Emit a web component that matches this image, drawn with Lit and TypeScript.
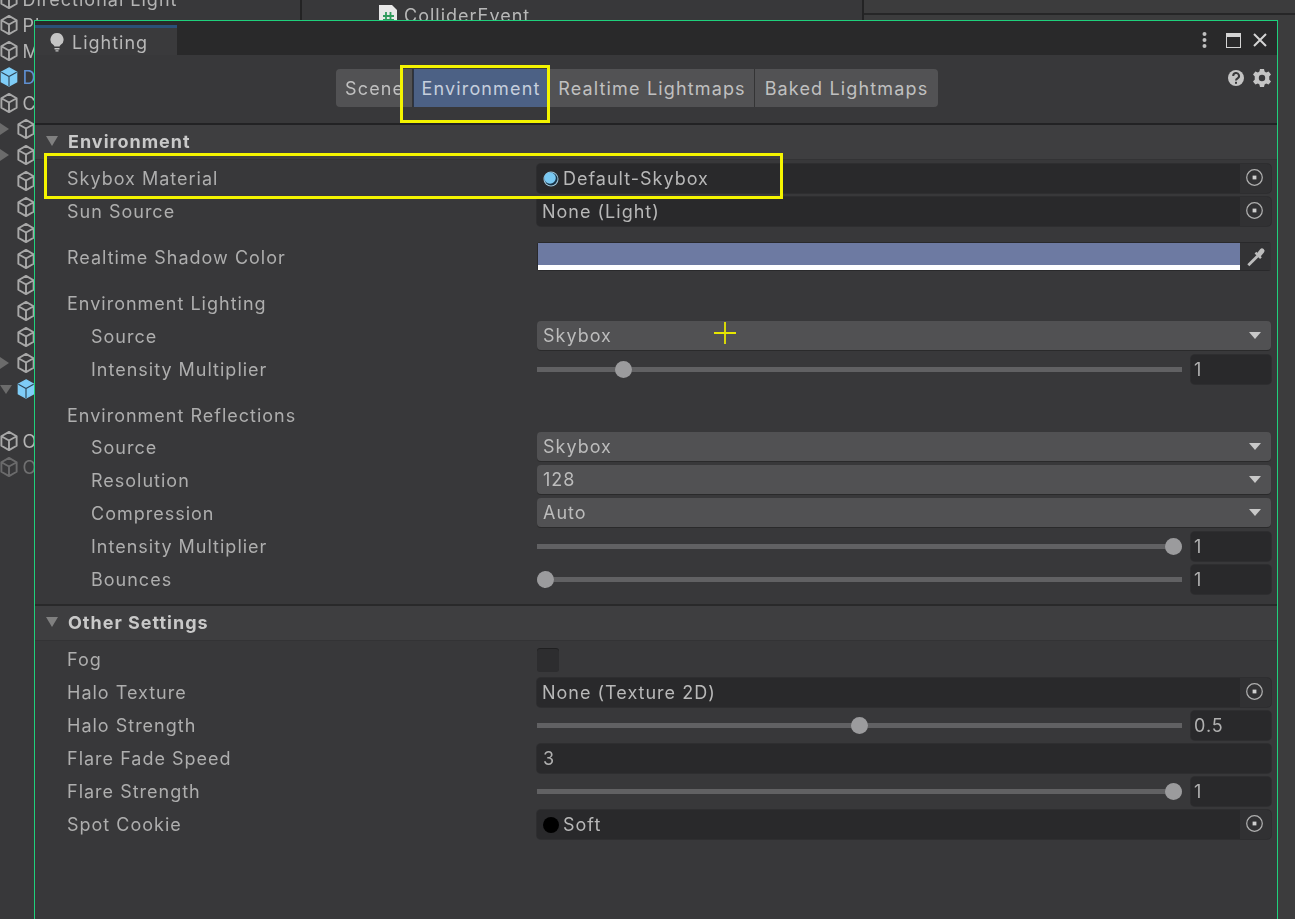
import { LitElement, html, css } from "lit";
import { customElement } from "lit/decorators.js";

const cube = (cls: string) => html`<svg class="cube ${cls}" viewBox="1 0.500 18 21">
  <path class="fill" d="M10 1.500 18 6v10l-8 4.500L2 16V6z"/>
  <path class="line" d="M10 1.500 18 6v10l-8 4.500L2 16V6zM2 6l8 4.500L18 6M10 10.500v10"/>
</svg>`;
const picker = () => html`<span class="pick"><svg viewBox="0 0 20 20"><circle cx="10" cy="10" r="8.200"/><rect x="8" y="8" width="4" height="4"/></svg></span>`;
const tri = () => html`<svg class="tri" viewBox="0 0 12 10"><path d="M0 0h12L6 10z"/></svg>`;
const dtri = () => html`<svg class="dtri" viewBox="0 0 12 7"><path d="M0 0h12L6 7z"/></svg>`;
const sky = () => html`<svg class="mini" viewBox="0 0 16 16"><circle cx="8" cy="8" r="7.500" fill="#9fc4d8"/><circle cx="8" cy="8" r="6.500" fill="#173347"/><circle cx="7" cy="7" r="5.800" fill="#79c8f2"/></svg>`;
const cookie = () => html`<svg class="mini" viewBox="0 0 16 16"><circle cx="8" cy="8" r="8" fill="#000"/></svg>`;

type Row = { label: string; kind: string; value?: string; pos?: number; sub?: boolean; gap?: boolean; up?: boolean; icon?: string };

const env: Row[] = [
  { label: "Skybox Material", kind: "object", value: "Default-Skybox", icon: "sky" },
  { label: "Sun Source", kind: "object", value: "None (Light)" },
  { label: "Realtime Shadow Color", kind: "color", gap: true },
  { label: "Environment Lighting", kind: "none", gap: true },
  { label: "Source", kind: "drop", value: "Skybox", sub: true },
  { label: "Intensity Multiplier", kind: "slider", value: "1", pos: 0.124, sub: true },
  { label: "Environment Reflections", kind: "none", gap: true },
  { label: "Source", kind: "drop", value: "Skybox", sub: true, up: true },
  { label: "Resolution", kind: "drop", value: "128", sub: true },
  { label: "Compression", kind: "drop", value: "Auto", sub: true },
  { label: "Intensity Multiplier", kind: "slider", value: "1", pos: 1, sub: true },
  { label: "Bounces", kind: "slider", value: "1", pos: 0, sub: true },
];
const other: Row[] = [
  { label: "Fog", kind: "check" },
  { label: "Halo Texture", kind: "object", value: "None (Texture 2D)" },
  { label: "Halo Strength", kind: "slider", value: "0.5", pos: 0.5 },
  { label: "Flare Fade Speed", kind: "num", value: "3" },
  { label: "Flare Strength", kind: "slider", value: "1", pos: 1 },
  { label: "Spot Cookie", kind: "object", value: "Soft", icon: "cookie" },
];

const tree = [
  { t: "Directional Light", i: 0 }, { t: "Plane", i: 0 }, { t: "Main Camera", i: 0, clip: true },
  { t: "Default", i: 0, blue: true, clip: true }, { t: "Cube", i: 0, clip: true },
  { t: "", i: 1, a: "r" }, { t: "", i: 1, a: "r" }, { t: "", i: 1 }, { t: "", i: 1 }, { t: "", i: 1 },
  { t: "", i: 1 }, { t: "", i: 1 }, { t: "", i: 1 }, { t: "", i: 1 }, { t: "", i: 1, a: "r" }, { t: "", i: 1, a: "d", blue: true },
  { t: "", i: 2 }, { t: "Other", i: 0, clip: true }, { t: "Other", i: 0, dim: true, clip: true },
] as { t: string; i: number; a?: string; blue?: boolean; dim?: boolean; clip?: boolean }[];

@customElement("app-root")
export class AppRoot extends LitElement {
  static styles = css`
    :host { display: block; width: 1295px; height: 919px; overflow: hidden; position: relative; background: #38383a;
      font-family: Inter, "Liberation Sans", sans-serif; font-size: 18px; letter-spacing: 1px; color: #aeaeae; }
    * { box-sizing: border-box; }
    .stage { display: grid; grid-template-columns: 302px 562px 1fr; height: 919px; filter: blur(.4px); }
    .hier { overflow: hidden; border-right: 2px solid #232324; }
    .hier-in { margin-top: -14px; }
    .node { height: 26px; display: flex; align-items: center; white-space: nowrap; color: #b4b4b4; position: relative; }
    .node.blue { color: #5f8fd0; }
    .node.dim { opacity: .45; }
    .node.i1 { padding-left: 17px; }
    .node .t { margin-left: 5px; }
    .node.clip .t { width: 11px; overflow: hidden; }
    .cube { width: 18px; height: 20px; flex: none; margin-left: -0.5px; }
    .cube .fill { fill: none; }
    .cube .line { fill: none; stroke: #a8a8a8; stroke-width: 2; stroke-linejoin: round; }
    .cube.blue .fill { fill: #7fcdf7; stroke: #7fcdf7; stroke-width: 1.500; }
    .cube.blue .line { stroke: #2e4456; stroke-width: 1.200; d: path("M2 6l8 4.500L18 6M10 10.500v10"); }
    .ar { width: 0; height: 0; position: absolute; left: 0; }
    .ar.r { border-left: 9px solid #6b6b6b; border-top: 6px solid transparent; border-bottom: 6px solid transparent; }
    .ar.d { margin-top: 1px; border-top: 9px solid #6b6b6b; border-left: 6px solid transparent; border-right: 6px solid transparent; }
    .proj { border-right: 2px solid #232324; padding: 5px 0 0 76px; display: flex; align-items: flex-start; gap: 6px; color: #b8b8b8; }
    .doc { width: 20px; height: 22px; flex: none; }
    .rt { background: #3c3c3d; }
    .rt-top { height: 15px; border-bottom: 2px solid #262627; }

    .win { position: absolute; left: 34px; top: 20px; width: 1244px; height: 910px; border: 1px solid #1fd07c; background: #38383a; }
    .inner { filter: blur(.4px); height: 100%; }
    .tabbar { height: 34px; background: #29292a; padding-top: 4px; display: flex; align-items: stretch; }
    .tab { width: 142px; background: #3a3a3c; border-top: 3px solid #2a5078; display: flex; align-items: center; padding: 2px 0 0 14px; gap: 7px; color: #b8b8b8; }
    .bulb { width: 16px; height: 19px; }
    .bulb path { fill: #c4c4c4; }
    .tools { margin-left: auto; display: flex; align-items: center; }
    .kebab { width: 5px; height: 18px; margin-right: 19px; }
    .kebab circle { fill: #c0c0c0; }
    .max { width: 15px; height: 15px; border: 1.500px solid #d4d4d4; border-top-width: 4px; margin-right: 11px; }
    .close { width: 16px; height: 16px; margin-right: 9px; }
    .close path { stroke: #d4d4d4; stroke-width: 2; fill: none; }

    .toolbar { height: 70px; position: relative; display: flex; padding: 14px 0 0 301px; border-bottom: 2px solid #222224; }
    .seg { display: flex; height: 38px; letter-spacing: 1.150px; }
    .seg span { background: #525254; display: flex; align-items: center; justify-content: center; color: #c0c0c0; border-right: 1px solid #343435; white-space: nowrap; }
    .seg span:first-child { border-radius: 4px 0 0 4px; justify-content: flex-start; padding-left: 9px; width: 77px; overflow: hidden; }
    .seg span:last-child { border-radius: 0 4px 4px 0; border-right: 0; }
    .seg .on { background: #4c6185; color: #c6cfdd; width: 136px; border-left: 1px solid #2a3446; }
    .seg .rl { width: 206px; padding-left: 1px; }
    .seg .bl { width: 183px; }
    .hbtns { position: absolute; right: 6px; top: 14px; display: flex; gap: 8px; }
    .hbtns svg { width: 18px; height: 18px; }
    .hbtns .g { fill: #c4c4c4; }

    .head { height: 35px; background: #3e3e40; display: flex; align-items: center; padding: 0 0 2px 11px; gap: 10px; font-weight: 700; color: #c9c9c9; border-bottom: 1px solid #333335; }
    .tri { width: 12px; height: 10px; flex: none; }
    .tri path { fill: #808080; }
    .rows { padding: 2px 6px 8px 32px; }
    .row { height: 33px; display: grid; grid-template-columns: 470px 1fr; align-items: center; white-space: nowrap; }
    .row.gap { margin-top: 13px; }
    .row.up { margin-top: -1px; }
    .row.sub .lbl { padding-left: 24px; }
    .field { height: 29px; background: #29292b; border-radius: 4px; display: flex; align-items: center; padding-left: 5px; color: #b8b8b8; box-shadow: 0 0 0 1px #2e2e30; }
    .field .val { flex: 1; overflow: hidden; }
    .pick { width: 31px; height: 29px; background: #313133; border-radius: 0 4px 4px 0; display: flex; align-items: center; justify-content: center; }
    .pick svg { width: 19px; height: 19px; margin: 0 2px 2px 0; }
    .pick circle { fill: none; stroke: #b0b0b0; stroke-width: 1.300; }
    .pick rect { fill: #cfcfcf; }
    .mini { width: 16px; height: 16px; flex: none; margin: 0 4px 0 1px; }
    .color { height: 29px; background: #29292b; border-radius: 3px; display: flex; padding: 1px 0 1px 1px; margin-bottom: 2px; }
    .swatch { flex: 1; display: flex; flex-direction: column; }
    .swatch i { display: block; flex: 1; background: #6d7aa2; }
    .swatch b { display: block; height: 5px; background: #fff; }
    .dropper { width: 31px; display: flex; align-items: center; justify-content: center; background: #333335; }
    .dropper svg { width: 22px; height: 22px; }
    .dropper path { fill: none; stroke: #bdbdbd; }
    .drop { height: 29px; background: #515153; border-radius: 4px; display: flex; align-items: center; justify-content: space-between; padding: 0 10px 0 6px; color: #bcbcbc; box-shadow: 0 1px 0 #2a2a2b; margin-bottom: 2px; }
    .dtri { width: 12px; height: 7px; }
    .dtri path { fill: #c8c8c8; }
    .slider { display: flex; align-items: center; gap: 9px; }
    .track { flex: 1; height: 5px; background: #616163; position: relative; }
    .thumb { position: absolute; top: -6px; width: 17px; height: 17px; border-radius: 50%; background: #9b9b9d; }
    .num { width: 80px; height: 29px; background: #29292b; border-radius: 4px; padding-left: 3px; display: flex; align-items: center; box-shadow: 0 0 0 1px #2e2e30; color: #b0b0b0; }
    .full { width: 100%; padding-left: 6px; }
    .check { width: 22px; height: 23px; background: #2d2d2f; border-radius: 3px; box-shadow: 0 -1px 0 #202021; margin-top: 2px; }
    .sep { border-top: 2px solid #29292a; }

    .mark { position: absolute; border: 3px solid #f4f400; pointer-events: none; }
    .m1 { left: 400px; top: 65px; width: 150px; height: 58px; }
    .m2 { left: 44px; top: 153px; width: 739px; height: 46px; }
    .cross { position: absolute; left: 714px; top: 322px; width: 22px; height: 22px; }
    .cross path { stroke: #e6e600; stroke-width: 1.800; }
  `;

  private field(r: Row) {
    switch (r.kind) {
      case "object":
        return html`<div class="field">${r.icon === "sky" ? sky() : r.icon === "cookie" ? cookie() : ""}<span class="val">${r.value}</span>${picker()}</div>`;
      case "color":
        return html`<div class="color"><div class="swatch"><i></i><b></b></div><span class="dropper"><svg viewBox="0 0 20 20"><path stroke-width="2.600" d="M3 17.500 11.500 9"/><path stroke-width="2.200" d="M9.500 6l5 5"/><path stroke-width="4.500" stroke-linecap="round" d="M13 7.500l2.500-3"/></svg></span></div>`;
      case "drop":
        return html`<div class="drop"><span>${r.value}</span>${dtri()}</div>`;
      case "slider":
        return html`<div class="slider"><div class="track"><span class="thumb" style="left:${(r.pos ?? 0) * 628}px"></span></div><div class="num">${r.value}</div></div>`;
      case "num":
        return html`<div class="num full">${r.value}</div>`;
      case "check":
        return html`<div class="check"></div>`;
      default:
        return html`<span></span>`;
    }
  }

  private rows(list: Row[]) {
    return list.map(
      (r) => html`<div class="row ${r.sub ? "sub" : ""} ${r.gap ? "gap" : ""} ${r.up ? "up" : ""}"><span class="lbl">${r.label}</span>${this.field(r)}</div>`
    );
  }

  render() {
    return html`
      <div class="stage">
        <div class="hier"><div class="hier-in">
          ${tree.map(
            (n) => html`<div class="node i${n.i} ${n.blue ? "blue" : ""} ${n.dim ? "dim" : ""} ${n.clip ? "clip" : ""}">
              ${n.a ? html`<span class="ar ${n.a}"></span>` : ""}
              ${n.i < 2 ? cube(n.blue ? "blue" : "") : ""}${n.t ? html`<span class="t">${n.t}</span>` : ""}</div>`
          )}
        </div></div>
        <div class="proj">
          <svg class="doc" viewBox="0 0 20 22"><path d="M1 0h13l5 5v17H1z" fill="#e8e8e8"/><path d="M8 7v12M12.500 7v12M5 11h11M5 15h11" stroke="#2f9a5c" stroke-width="1.800"/></svg>
          <span>ColliderEvent</span>
        </div>
        <div class="rt"><div class="rt-top"></div></div>
      </div>
      <div class="win"><div class="inner">
        <div class="tabbar">
          <div class="tab">
            <svg class="bulb" viewBox="0 0 16 19"><path d="M8 0a6.500 6.500 0 0 1 3.500 12c-.6.400-.8 1-.9 1.600H5.400c-.1-.6-.3-1.200-.9-1.600A6.500 6.500 0 0 1 8 0zM5.500 15h5v1.400h-5zM6.500 17.300h3V18.600h-3z"/></svg>
            Lighting
          </div>
          <div class="tools">
            <svg class="kebab" viewBox="0 0 5 18"><circle cx="2.500" cy="3" r="2"/><circle cx="2.500" cy="9" r="2"/><circle cx="2.500" cy="15" r="2"/></svg>
            <div class="max"></div>
            <svg class="close" viewBox="0 0 16 16"><path d="M2 2l12 12M14 2 2 14"/></svg>
          </div>
        </div>
        <div class="toolbar">
          <div class="seg"><span>Scene</span><span class="on">Environment</span><span class="rl">Realtime Lightmaps</span><span class="bl">Baked Lightmaps</span></div>
          <div class="hbtns">
            <svg viewBox="0 0 18 18"><circle class="g" cx="9" cy="9" r="8"/><path d="M6.200 7a2.900 2.900 0 1 1 4.400 2.400C9.600 10 9 10.500 9 11.500" fill="none" stroke="#38383a" stroke-width="2"/><rect x="8" y="12.800" width="2" height="2" fill="#38383a"/></svg>
            <svg viewBox="0 0 18 18"><path class="g" fill-rule="evenodd" d="M7 0h4l.6 2.600 1.500.8L15.600 2.500l2.400 3-1.800 2 .1 1.500-.1 1.500 1.800 2-2.400 3-2.500-.9-1.500.8L11 18H7l-.6-2.600-1.500-.8-2.500.9-2.400-3 1.800-2L1.700 9l.1-1.500-1.800-2 2.400-3 2.500.9 1.500-.8zM9 5.800a3.200 3.200 0 1 0 0 6.400 3.200 3.200 0 0 0 0-6.400z"/></svg>
          </div>
        </div>
        <div class="head">${tri()}<span>Environment</span></div>
        <div class="rows">${this.rows(env)}</div>
        <div class="sep"></div>
        <div class="head">${tri()}<span>Other Settings</span></div>
        <div class="rows">${this.rows(other)}</div>
      </div></div>
      <div class="mark m1"></div>
      <div class="mark m2"></div>
      <svg class="cross" viewBox="0 0 22 22"><path d="M11 0v22M0 11h22"/></svg>
    `;
  }
}
